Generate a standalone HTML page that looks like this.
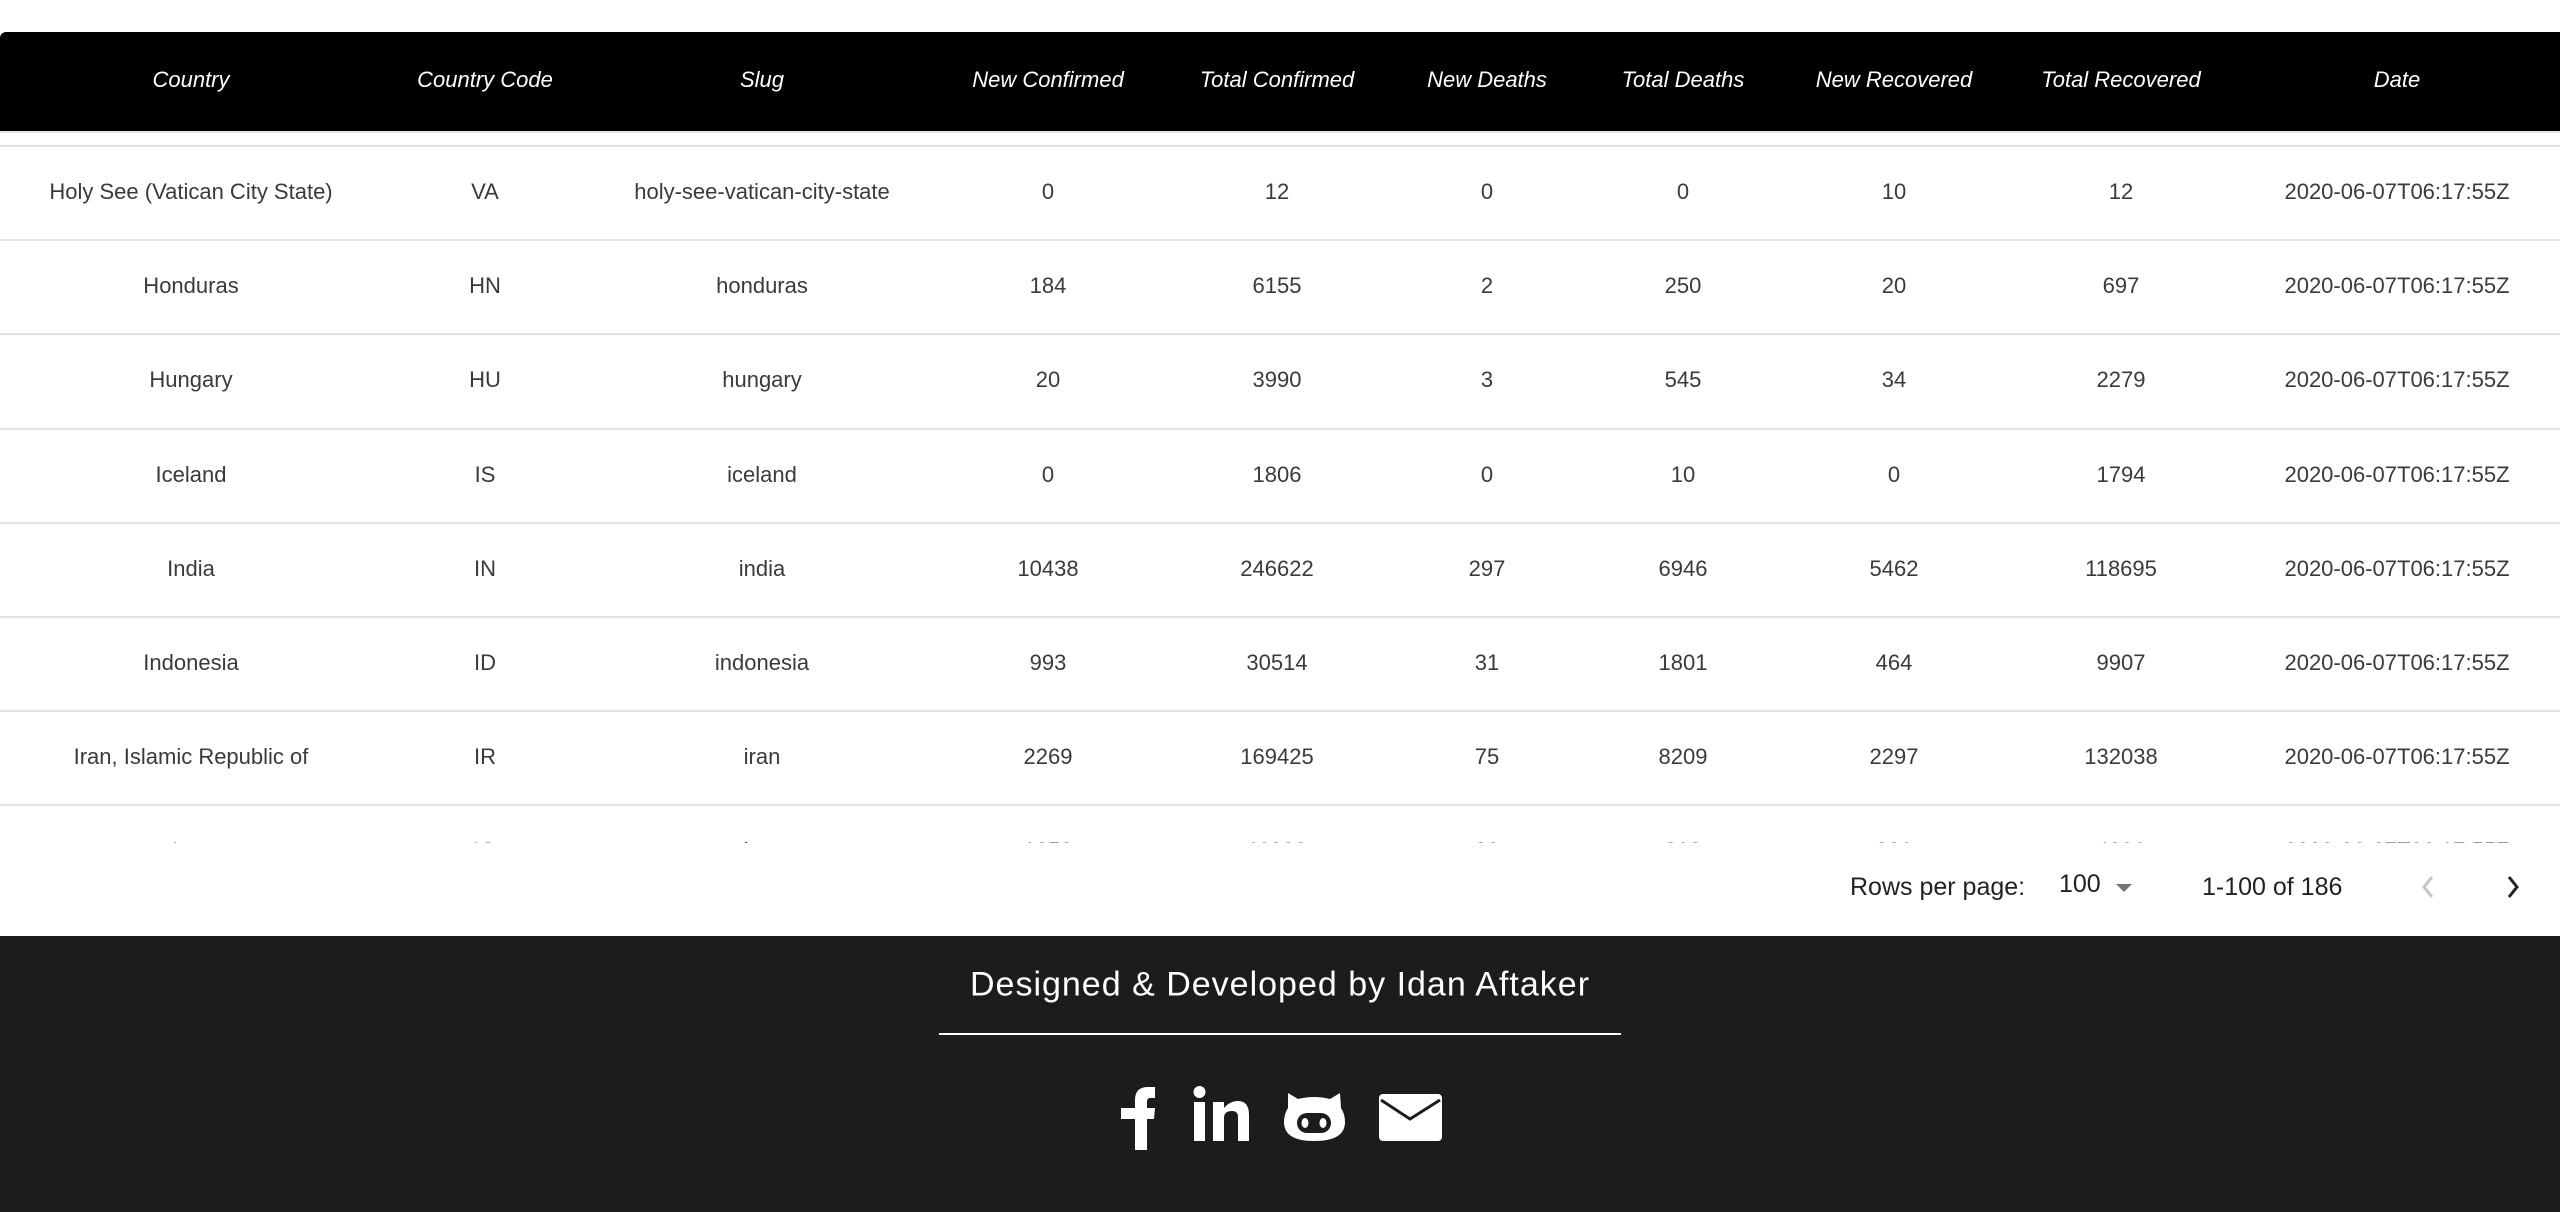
<!DOCTYPE html>
<html><head><meta charset="utf-8">
<style>
*{margin:0;padding:0;box-sizing:border-box}
body{width:2560px;height:1212px;background:#fff;font-family:"Liberation Sans",sans-serif;position:relative;overflow:hidden}
.hdr{position:absolute;left:0;top:32px;width:2560px;height:99px;background:#000;border-radius:6px 0 0 0}
.c{position:absolute;transform:translate(-50%,-50%);white-space:nowrap}
.h{color:#fff;font-style:italic;font-size:22px;top:80px}
.line{position:absolute;left:0;width:2560px;height:2px;background:#e4e4e4}
.t{color:#3a3a3a;font-size:22px}
.clip{position:absolute;left:0;top:133px;width:2560px;height:710px;overflow:hidden}
.pg{position:absolute;font-size:25px;color:#222;top:873px}
.foot{position:absolute;left:0;top:936px;width:2560px;height:276px;background:#1c1c1c}
</style></head><body>
<div class="hdr"></div>
<div class="c h" style="left:191px">Country</div>
<div class="c h" style="left:485px">Country Code</div>
<div class="c h" style="left:762px">Slug</div>
<div class="c h" style="left:1048px">New Confirmed</div>
<div class="c h" style="left:1277px">Total Confirmed</div>
<div class="c h" style="left:1487px">New Deaths</div>
<div class="c h" style="left:1683px">Total Deaths</div>
<div class="c h" style="left:1894px">New Recovered</div>
<div class="c h" style="left:2121px">Total Recovered</div>
<div class="c h" style="left:2397px">Date</div>
<div class="line" style="top:131px"></div>
<div class="clip" id="clip"></div>
<div class="pg" style="left:1850px">Rows per page:</div>
<div class="pg" style="left:2059px;top:870px">100</div>
<div style="position:absolute;left:2116px;top:884px;width:0;height:0;border-left:8px solid transparent;border-right:8px solid transparent;border-top:8px solid #757575"></div>
<div class="pg" style="left:2202px">1-100 of 186</div>
<svg style="position:absolute;left:2418px;top:874px" width="20" height="26" viewBox="0 0 20 26"><path d="M14 3 L6 13 L14 23" stroke="#c4c4c4" stroke-width="3" fill="none"/></svg>
<svg style="position:absolute;left:2503px;top:874px" width="20" height="26" viewBox="0 0 20 26"><path d="M6 3 L14 13 L6 23" stroke="#222" stroke-width="3" fill="none"/></svg>
<div class="foot"></div>
<div class="c" style="left:1280px;top:985px;color:#fff;font-size:34px;letter-spacing:1px;font-weight:300">Designed &amp; Developed by Idan Aftaker</div>
<div style="position:absolute;left:939px;top:1033px;width:682px;height:2px;background:#fff"></div>
<svg style="position:absolute;left:1115px;top:1085px" width="340" height="70" viewBox="1115 1085 340 70" fill="#fff">
<path d="M1135 1150 V1119 H1121 V1108 H1135 V1100 Q1135 1087 1148 1087 H1155 V1098 H1150 Q1147 1098 1147 1102 V1108 H1155 L1154 1119 H1147 V1150 Z"/>
<rect x="1194" y="1102" width="11" height="39"/><circle cx="1199.5" cy="1092" r="6"/>
<path d="M1213 1141 V1102 H1224 V1108 Q1230 1101 1238 1101 Q1249 1101 1249 1115 V1141 H1238 V1117 Q1238 1111 1232 1111 Q1224 1111 1224 1118 V1141 Z"/>
<path d="M1288 1093 L1298 1099 Q1314 1095 1330 1099 L1340 1093 L1341 1108 Q1345 1114 1345 1122 Q1345 1141 1314 1141 Q1284 1141 1284 1122 Q1284 1114 1288 1108 Z"/>
<rect x="1297" y="1113" width="34" height="20" rx="10" fill="#1c1c1c"/>
<ellipse cx="1305" cy="1123" rx="3.5" ry="5"/><ellipse cx="1323" cy="1123" rx="3.5" ry="5"/>
<rect x="1379" y="1094" width="63" height="47" rx="4"/>
<path d="M1381 1100 L1410 1119 L1440 1100" stroke="#1c1c1c" stroke-width="3" fill="none"/>
</svg>
<script>
const rows=[["Holy See (Vatican City State)","VA","holy-see-vatican-city-state","0","12","0","0","10","12"],
["Honduras","HN","honduras","184","6155","2","250","20","697"],
["Hungary","HU","hungary","20","3990","3","545","34","2279"],
["Iceland","IS","iceland","0","1806","0","10","0","1794"],
["India","IN","india","10438","246622","297","6946","5462","118695"],
["Indonesia","ID","indonesia","993","30514","31","1801","464","9907"],
["Iran, Islamic Republic of","IR","iran","2269","169425","75","8209","2297","132038"],
["Iraq","IQ","iraq","1252","11098","32","318","321","4291"]];
const xs=[191,485,762,1048,1277,1487,1683,1894,2121,2397];
let h="";
rows.forEach((r,i)=>{const top=12+i*94.2;h+=`<div class="line" style="top:${top}px"></div>`;
r.concat(["2020-06-07T06:17:55Z"]).forEach((v,j)=>{h+=`<div class="c t" style="left:${xs[j]}px;top:${top+47}px">${v}</div>`});});
document.getElementById("clip").innerHTML=h;
</script>
</body></html>
